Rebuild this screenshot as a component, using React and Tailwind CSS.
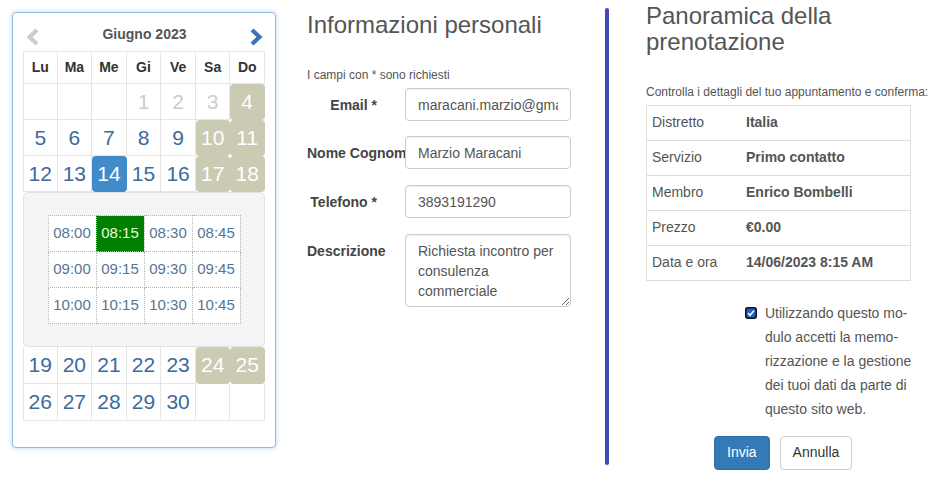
const WEEKDAYS = ['Lu', 'Ma', 'Me', 'Gi', 'Ve', 'Sa', 'Do'];

// d = day number, t = type (dis | we | sel)
const TOP_ROWS = [
  [null, null, null, { d: 1, t: 'dis' }, { d: 2, t: 'dis' }, { d: 3, t: 'dis' }, { d: 4, t: 'we' }],
  [{ d: 5 }, { d: 6 }, { d: 7 }, { d: 8 }, { d: 9 }, { d: 10, t: 'we' }, { d: 11, t: 'we' }],
  [{ d: 12 }, { d: 13 }, { d: 14, t: 'sel' }, { d: 15 }, { d: 16 }, { d: 17, t: 'we' }, { d: 18, t: 'we' }],
];

const BOTTOM_ROWS = [
  [{ d: 19 }, { d: 20 }, { d: 21 }, { d: 22 }, { d: 23 }, { d: 24, t: 'we' }, { d: 25, t: 'we' }],
  [{ d: 26 }, { d: 27 }, { d: 28 }, { d: 29 }, { d: 30 }, null, null],
];

const SLOTS = [
  ['08:00', '08:15', '08:30', '08:45'],
  ['09:00', '09:15', '09:30', '09:45'],
  ['10:00', '10:15', '10:30', '10:45'],
];

const SUMMARY = [
  ['Distretto', 'Italia'],
  ['Servizio', 'Primo contatto'],
  ['Membro', 'Enrico Bombelli'],
  ['Prezzo', '€0.00'],
  ['Data e ora', '14/06/2023 8:15 AM'],
];

const DayCell = ({ cell, col, height }) => {
  const base = `flex items-center justify-center text-[21px] border-b border-r ${height} ${
    col === 0 ? 'border-l' : ''
  }`;
  if (!cell) return <div className={`${base} border-[#e6e6e6]`} />;
  if (cell.t === 'we') {
    return (
      <div className={`${base} border-[#cbcab3] bg-[#cbcab3] rounded-[4px] text-white`}>{cell.d}</div>
    );
  }
  if (cell.t === 'sel') {
    return (
      <div className={`${base} border-[#428bca] bg-[#428bca] rounded-[4px] text-white`}>{cell.d}</div>
    );
  }
  if (cell.t === 'dis') {
    return <div className={`${base} border-[#e6e6e6] text-[#cccccc]`}>{cell.d}</div>;
  }
  return <div className={`${base} border-[#e6e6e6] text-[#3b6b9c]`}>{cell.d}</div>;
};

const Chevron = ({ dir, color }) => (
  <svg width="15" height="18" viewBox="0 0 15 18" className="mt-[6px]">
    <polyline
      points={dir === 'left' ? '12,2 4.5,9 12,16' : '3,2 10.5,9 3,16'}
      fill="none"
      stroke={color}
      strokeWidth="4.2"
      strokeLinejoin="miter"
    />
  </svg>
);

const Calendar = () => (
  <div className="ml-[12px] mt-[12px] w-[264px] h-[436px] shrink-0 border border-[#94bbe2] rounded-[4px] shadow-[0_0_5px_rgba(102,160,220,0.45)] px-[10px] bg-white">
    <div className="h-[38px] flex items-center justify-between pt-[4px] pl-[2px] pr-[1px]">
      <Chevron dir="left" color="#cccccc" />
      <span className="text-[14px] font-bold text-[#555]">Giugno 2023</span>
      <Chevron dir="right" color="#3a74b2" />
    </div>
    <div className="grid grid-cols-7 w-[242px]">
      {WEEKDAYS.map((w, i) => (
        <div
          key={w}
          className={`h-[33px] flex items-center justify-center text-[14px] font-bold text-[#333] border-t border-b border-r border-[#e6e6e6] ${
            i === 0 ? 'border-l' : ''
          }`}
        >
          {w}
        </div>
      ))}
      {TOP_ROWS.map((row, r) =>
        row.map((cell, c) => <DayCell key={`t${r}-${c}`} cell={cell} col={c} height="h-[36px]" />)
      )}
      <div className="col-span-7 h-[155px] bg-[#f4f4f4] border border-[#e2e2e2] rounded-[5px] flex items-center justify-center">
        <table className="border-collapse">
          <tbody>
            {SLOTS.map((row) => (
              <tr key={row[0]}>
                {row.map((s) => (
                  <td
                    key={s}
                    className={`w-[48px] h-[36px] p-0 text-center text-[15px] border border-dotted border-[#b5b5b5] ${
                      s === '08:15' ? 'bg-[#008000] text-[#eefbd9]' : 'bg-white text-[#557697]'
                    }`}
                  >
                    {s}
                  </td>
                ))}
              </tr>
            ))}
          </tbody>
        </table>
      </div>
      {BOTTOM_ROWS.map((row, r) =>
        row.map((cell, c) => <DayCell key={`b${r}-${c}`} cell={cell} col={c} height="h-[37px]" />)
      )}
    </div>
  </div>
);

const inputCls =
  'relative ml-[28px] w-[166px] border border-[#cccccc] rounded-[4px] px-[12px] text-[14px] text-[#555] bg-white shadow-[inset_0_1px_1px_rgba(0,0,0,0.075)] outline-none';

const FieldRow = ({ label, className = '', children }) => (
  <div className={`flex items-start ${className}`}>
    <div className="w-[70px] shrink-0 text-right whitespace-nowrap pt-[7px] text-[14px] leading-[20px] font-bold text-[#444]">
      {label}
    </div>
    {children}
  </div>
);

const PersonalInfo = () => (
  <div className="ml-[31px] w-[298px] shrink-0">
    <h3 className="mt-[12px] text-[24px] leading-[26px] text-[#555]">Informazioni personali</h3>
    <p className="mt-[29px] text-[12px] leading-[16px] text-[#555]">I campi con * sono richiesti</p>
    <FieldRow label="Email *" className="mt-[5px]">
      <input readOnly value="maracani.marzio@gmail.com" className={`${inputCls} h-[33px]`} />
    </FieldRow>
    <FieldRow label="Nome Cognome" className="mt-[15px]">
      <input readOnly value="Marzio Maracani" className={`${inputCls} h-[33px]`} />
    </FieldRow>
    <FieldRow label="Telefono *" className="mt-[16px]">
      <input readOnly value="3893191290" className={`${inputCls} h-[33px]`} />
    </FieldRow>
    <FieldRow label="Descrizione" className="mt-[16px]">
      <textarea
        readOnly
        value="Richiesta incontro per consulenza commerciale"
        className={`${inputCls} h-[73px] py-[6px] leading-[20px]`}
      />
    </FieldRow>
  </div>
);

const Summary = () => (
  <div className="ml-[37px] w-[292px] shrink-0">
    <h3 className="mt-[3px] text-[24px] leading-[26.4px] text-[#555]">
      Panoramica della
      <br />
      prenotazione
    </h3>
    <p className="mt-[28px] text-[12px] leading-[16px] text-[#555] whitespace-nowrap">
      Controlla i dettagli del tuo appuntamento e conferma:
    </p>
    <div className="mt-[5px] w-[265px] border-t border-x border-[#dddddd]">
      {SUMMARY.map(([k, v]) => (
        <div key={k} className="h-[35px] flex items-center border-b border-[#dddddd] text-[14px]">
          <div className="w-[94px] pl-[5px] text-[#555]">{k}</div>
          <div className="pl-[5px] font-bold text-[#555]">{v}</div>
        </div>
      ))}
    </div>
    <div className="mt-[20px] ml-[99px] flex items-start">
      <svg width="12" height="12" viewBox="0 0 12 12" className="mt-[6px] shrink-0">
        <rect x="0.75" y="0.75" width="10.5" height="10.5" rx="2" fill="#1f5fbf" stroke="#111" strokeWidth="1.5" />
        <polyline points="3,6 5,8.2 9,3.8" fill="none" stroke="#fff" strokeWidth="1.6" />
      </svg>
      <p className="ml-[8px] text-[14px] leading-[24px] text-[#555] whitespace-nowrap">
        Utilizzando questo mo-
        <br />
        dulo accetti la memo-
        <br />
        rizzazione e la gestione
        <br />
        dei tuoi dati da parte di
        <br />
        questo sito web.
      </p>
    </div>
    <div className="mt-[15px] ml-[68px] flex gap-[10px]">
      <button type="button" className="h-[34px] px-[12px] rounded-[4px] border border-[#2e6da4] bg-[#337ab7] text-white text-[14px]">
        Invia
      </button>
      <button type="button" className="h-[34px] px-[12px] rounded-[4px] border border-[#cccccc] bg-white text-[#333] text-[14px]">
        Annulla
      </button>
    </div>
  </div>
);

const App = () => (
  <div className="w-[938px] h-[482px] overflow-hidden bg-white flex items-start font-['Liberation_Sans',Arial,sans-serif]">
    <Calendar />
    <PersonalInfo />
    <div className="mt-[8px] w-[4px] h-[457px] shrink-0 rounded-full bg-[#4048bd]" />
    <Summary />
  </div>
);

export default App;
